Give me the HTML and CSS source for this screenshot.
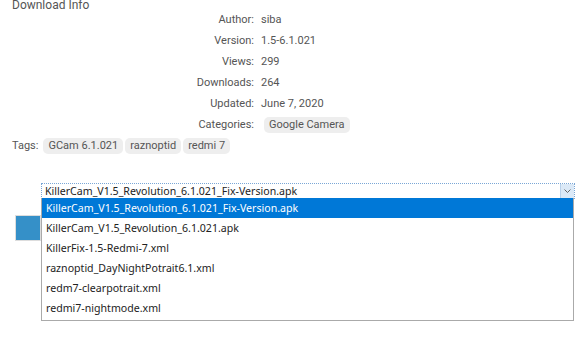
FILE: index.html
```html
<!DOCTYPE html>
<html lang="en">
<head>
  <meta charset="UTF-8">
  <title>Download Info</title>
  <link rel="stylesheet" href="styles.css">
</head>
<body>

<div class="download-box">
  <h3 class="box-title">Download Info</h3>

  <div class="info">
    <div class="info-row"><span class="info-label">Author:</span><span class="info-value">siba</span></div>
    <div class="info-row"><span class="info-label">Version:</span><span class="info-value">1.5-6.1.021</span></div>
    <div class="info-row"><span class="info-label">Views:</span><span class="info-value">299</span></div>
    <div class="info-row"><span class="info-label">Downloads:</span><span class="info-value">264</span></div>
    <div class="info-row"><span class="info-label">Updated:</span><span class="info-value">June 7, 2020</span></div>
    <div class="info-row"><span class="info-label">Categories:</span><span class="info-value"><span class="pill">Google Camera</span></span></div>
  </div>

  <div class="tags">
    <span class="tags-label">Tags:</span>
    <span class="pill">GCam 6.1.021</span>
    <span class="pill">raznoptid</span>
    <span class="pill">redmi 7</span>
  </div>

  <div class="file-picker">
    <div class="select">
      <span class="select-text">KillerCam_V1.5_Revolution_6.1.021_Fix-Version.apk</span>
      <span class="select-arrow">
        <svg width="7" height="4" viewBox="0 0 7 4"><path d="M0.5 0.5 L3.5 3.5 L6.5 0.5" fill="none" stroke="#666" stroke-width="1"/></svg>
      </span>
    </div>
    <div class="picker-row">
      <button class="download-btn"></button>
    </div>

    <ul class="options">
      <li class="selected">KillerCam_V1.5_Revolution_6.1.021_Fix-Version.apk</li>
      <li>KillerCam_V1.5_Revolution_6.1.021.apk</li>
      <li>KillerFix-1.5-Redmi-7.xml</li>
      <li>raznoptid_DayNightPotrait6.1.xml</li>
      <li>redm7-clearpotrait.xml</li>
      <li>redmi7-nightmode.xml</li>
    </ul>
  </div>
</div>

</body>
</html>
```

FILE: styles.css
```css
body {
  margin: 0;
  background-color: #fff;
  font-family: Roboto, "Liberation Sans", sans-serif;
  font-size: 11px;
  color: #555;
}

.download-box {
  min-height: 342px;
  padding: 0 12px;
}

.box-title {
  margin: -2px 0 0 0;
  font-size: 12px;
  font-weight: normal;
  line-height: 14px;
  color: #555;
}

.info {
  margin-top: -3px;
}

.info-row {
  display: flex;
  height: 21px;
  align-items: center;
}

.info-label {
  width: 242px;
  text-align: right;
  padding-right: 7px;
}

.pill {
  display: inline-block;
  background-color: #eee;
  border-radius: 5px;
  padding: 1px 5px;
  line-height: 14px;
}

.info-value .pill {
  margin-left: 3px;
}

.tags {
  display: flex;
  align-items: center;
  gap: 2px;
  height: 21px;
}

.tags-label {
  margin-right: 3px;
}

.file-picker {
  position: relative;
  margin-top: 27px;
  padding-left: 29px;
}

.select {
  display: flex;
  align-items: center;
  width: 532px;
  height: 14px;
  border: 1px dotted #7aa7d6;
  font-family: "Noto Sans", "Open Sans", sans-serif;
  font-size: 10.6px;
  color: #222;
}

.select-text {
  flex: 1;
  padding-left: 3px;
  line-height: 14px;
}

.select-arrow {
  display: flex;
  align-items: center;
  justify-content: center;
  width: 13px;
  height: 14px;
  background-color: #dbe9f7;
  border-left: 1px solid #b9d1ea;
}

.picker-row {
  padding-top: 16px;
  margin-left: -26px;
}

.download-btn {
  display: block;
  width: 26px;
  height: 26px;
  border: 1px solid #ddd;
  background-color: #3590c8;
  padding: 0;
}

.options {
  position: absolute;
  top: 15px;
  left: 29px;
  width: 531px;
  margin: 0;
  padding: 0 0 2px 0;
  list-style: none;
  background-color: #fff;
  border: 1px solid #aaa;
  border-top: none;
  font-family: "Noto Sans", "Open Sans", sans-serif;
  font-size: 10.6px;
  color: #222;
}

.options li {
  height: 20px;
  line-height: 20px;
  padding-left: 4px;
}

.options li.selected {
  background-color: #0078d7;
  color: #fff;
}
```
